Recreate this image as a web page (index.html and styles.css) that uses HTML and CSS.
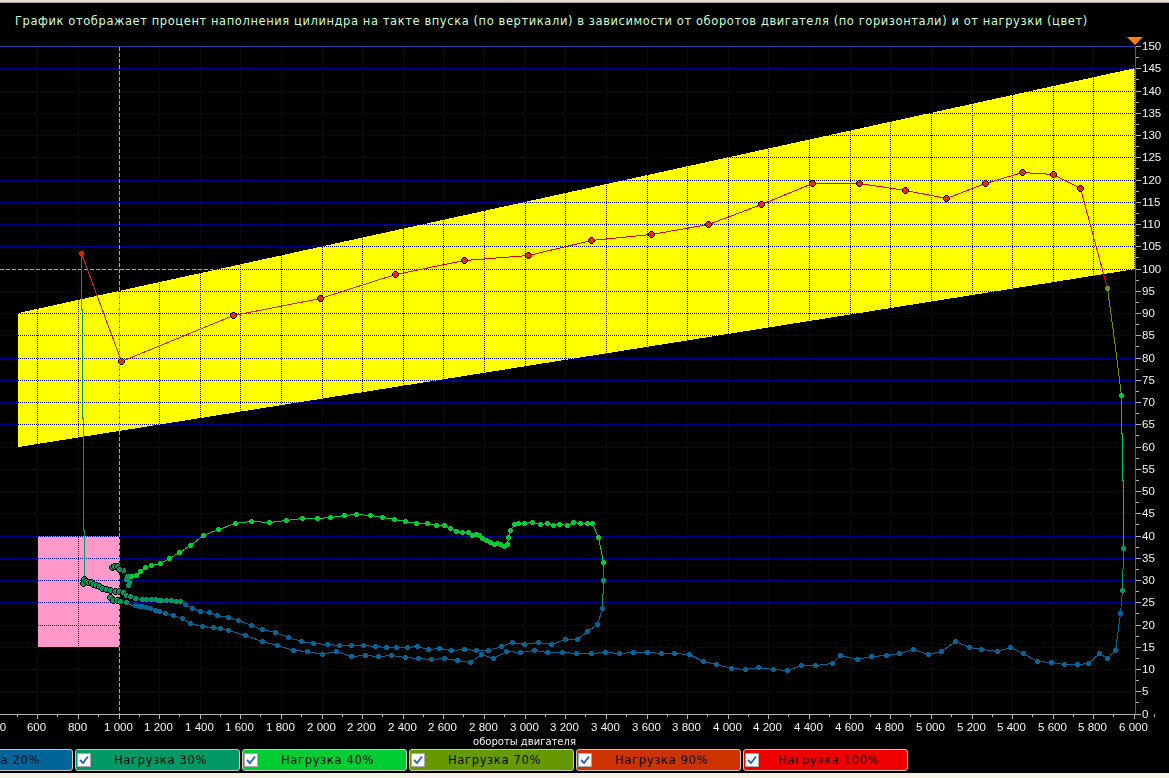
FILE: index.html
```html
<!DOCTYPE html>
<html lang="ru">
<head>
<meta charset="utf-8">
<title>График наполнения цилиндра</title>
<link rel="stylesheet" href="styles.css">
</head>
<body>
<div class="strip-top"></div>
<main class="panel">
  <h1 class="title">График отображает процент наполнения цилиндра на такте впуска (по вертикали) в зависимости от оборотов двигателя (по горизонтали) и от нагрузки (цвет)</h1>
  <div class="plot">
    <canvas id="grid" class="grid" width="1169" height="718"></canvas>
    <svg id="chart" class="chart" width="1169" height="718" viewBox="0 30 1169 718" xmlns="http://www.w3.org/2000/svg"></svg>
  </div>
  <div class="tabs">
    <label class="tab tab-20"><span class="check"><svg width="10" height="10" viewBox="0 0 10 10"><path class="tick" d="M1 5 L4 8 L9 1.5"/></svg></span><span class="tab-text">Нагрузка 20%</span></label>
    <label class="tab tab-30"><span class="check"><svg width="10" height="10" viewBox="0 0 10 10"><path class="tick" d="M1 5 L4 8 L9 1.5"/></svg></span><span class="tab-text">Нагрузка 30%</span></label>
    <label class="tab tab-40"><span class="check"><svg width="10" height="10" viewBox="0 0 10 10"><path class="tick" d="M1 5 L4 8 L9 1.5"/></svg></span><span class="tab-text">Нагрузка 40%</span></label>
    <label class="tab tab-70"><span class="check"><svg width="10" height="10" viewBox="0 0 10 10"><path class="tick" d="M1 5 L4 8 L9 1.5"/></svg></span><span class="tab-text">Нагрузка 70%</span></label>
    <label class="tab tab-90"><span class="check"><svg width="10" height="10" viewBox="0 0 10 10"><path class="tick" d="M1 5 L4 8 L9 1.5"/></svg></span><span class="tab-text">Нагрузка 90%</span></label>
    <label class="tab tab-100"><span class="check"><svg width="10" height="10" viewBox="0 0 10 10"><path class="tick" d="M1 5 L4 8 L9 1.5"/></svg></span><span class="tab-text">Нагрузка 100%</span></label>
  </div>
</main>
<div class="strip-bottom"></div>
<script src="chart.js"></script>
</body>
</html>
```
FILE: styles.css
```css
* { box-sizing: border-box; }
html, body { margin: 0; height: 100%; overflow: hidden; background: #f6f2e6; }
body { display: flex; flex-direction: column; width: 1169px; height: 778px; }
.strip-top { height: 3px; flex: none; background: linear-gradient(#e8e4d8, #d8d4c4 70%, #77756c); }
.strip-bottom { flex: 1; background: #f6f2e6; }
.panel { flex: none; height: 770px; background: #000; overflow: hidden; }
.title {
  margin: 0; height: 27px; padding: 10px 0 0 15px;
  font: 400 11.5px/16px "DejaVu Sans", sans-serif;
  letter-spacing: 0.58px; color: #ccffcc; white-space: nowrap;
}
.plot { position: relative; width: 1169px; height: 718px; }
.grid { display: block; }
.chart { position: absolute; left: 0; top: 0; display: block; }
.tabs { display: flex; gap: 2px; margin: 1px 0 0 -92px; height: 22px; }
.tab {
  position: relative; flex: none; width: 165px; height: 22px;
  display: flex; align-items: center; justify-content: center;
  border: 1px solid #c8c8c0; border-radius: 3px;
}
.tab-text { font: 400 11.5px/14px "DejaVu Sans", sans-serif; letter-spacing: 0.65px; color: #0a0a0a; padding-left: 6px; }
.check {
  position: absolute; left: 1px; top: 3px; width: 14px; height: 14px;
  background: #fff; border: 1px solid #a8a8a8;
  display: flex; align-items: center; justify-content: center;
}
.tick { fill: none; stroke: #316ac5; stroke-width: 2; }
.tab-20 { background: #006699; }
.tab-30 { background: #009966; }
.tab-40 { background: #00cc33; }
.tab-70 { background: #669900; }
.tab-90 { background: #cc3300; }
.tab-100 { background: #ee0000; }

.c-cross { fill: none; stroke: #a8a6bc; stroke-width: 1; stroke-dasharray: 4 2; shape-rendering: crispEdges; }
.c-top { fill: none; stroke: #3333aa; stroke-width: 1; shape-rendering: crispEdges; }
.c-yaxis { fill: none; stroke: #55559a; stroke-width: 1; shape-rendering: crispEdges; }
.c-ticks { fill: none; stroke: #b4b4b4; stroke-width: 1; shape-rendering: crispEdges; }
.c-line { fill: none; stroke-width: 1; shape-rendering: crispEdges; }
.c-dot { shape-rendering: crispEdges; }
.c-num { font: 400 11.5px "Liberation Sans", sans-serif; fill: #f4f4f4; }
.c-xname { font: 400 10px "DejaVu Sans", sans-serif; fill: #f4f4f4; text-anchor: middle; }
.c-yname { font: 400 10px "DejaVu Sans", sans-serif; fill: #f4f4f4; text-anchor: middle; }
.c-marker { fill: #ff8010; }
```
FILE: chart.js
```js
(function () {
  var NS = 'http://www.w3.org/2000/svg';
  var svg = document.getElementById('chart');
  function el(name, attrs, text) {
    var e = document.createElementNS(NS, name);
    for (var k in attrs) e.setAttribute(k, attrs[k]);
    if (text != null) e.textContent = text;
    svg.appendChild(e);
    return e;
  }
  // converts coordinates read from a crop (scale 3) to page coordinates
  function crop(bx, by, list) {
    var out = [];
    for (var i = 0; i < list.length; i += 2) out.push([bx + list[i] / 3, by + list[i + 1] / 3]);
    return out;
  }
  function line(pts, color) {
    el('polyline', { 'class': 'c-line', stroke: color, points: pts.map(function (p) { return (Math.floor(p[0]) + 0.5) + ',' + (Math.floor(p[1]) + 0.5); }).join(' ') });
  }
  function plus(x, y, r, fill) {
    x = Math.floor(x); y = Math.floor(y);
    var d;
    if (r === 2) d = 'M' + (x - 1) + ' ' + (y - 2) + 'h3v1h1v3h-1v1h-3v-1h-1v-3h1z';
    else d = 'M' + (x - 1) + ' ' + (y - 3) + 'h3v1h1v1h1v3h-1v1h-1v1h-3v-1h-1v-1h-1v-3h1v-1h1z';
    el('path', { 'class': 'c-dot', fill: fill, d: d });
  }
  function dots(pts, color) { pts.forEach(function (p) { plus(p[0], p[1], 2, color); }); }
  function outlined(pts, color) {
    pts.forEach(function (p) { plus(p[0], p[1], 3, '#000'); plus(p[0], p[1], 2, color); });
  }

  var gx = [], gy = [], k, i;
  for (k = -3; k <= 25; k++) gx.push(Math.floor(119 + 40.62 * k));
  for (k = 0; k <= 30; k++) gy.push(Math.floor(46.6 + 22.25 * k));

  // pixel layer under the curves: band, idle zone and dotted grid (canvas origin is y=30)
  var ctx = document.getElementById('grid').getContext('2d');
  var OY = 30;
  ctx.fillStyle = '#ffff00';
  for (i = 18; i < 1135; i++) {
    var f = (i - 18) / 1117;
    var top = Math.round(313 + (68 - 313) * f), bottom = Math.round(447 + (269 - 447) * f);
    ctx.fillRect(i, top - OY, 1, bottom - top);
  }
  ctx.fillStyle = '#ff99cc';
  ctx.fillRect(38, 536 - OY, 81, 111);
  ctx.fillStyle = '#000099';
  gx.forEach(function (x) {
    if (x < 0) return;
    for (i = 47; i < 714; i += 2) ctx.fillRect(x, i - OY, 1, 1);
  });
  gy.forEach(function (y) {
    for (i = 0; i < 1135; i += 2) ctx.fillRect(i, y - OY, 1, 1);
  });

  el('path', { 'class': 'c-cross', d: 'M119.5 47V714M0 269.5H213' });
  el('path', { 'class': 'c-top', d: 'M0 46.5H1135' });
  el('path', { 'class': 'c-yaxis', d: 'M1135.5 46V714' });

  var t = 'M0 714.5H1136';
  gx.forEach(function (x) {
    t += 'M' + x + '.5 714V719';
    t += 'M' + Math.floor(x + 20.3) + '.5 714V717';
  });
  gy.forEach(function (y, n) {
    t += 'M1136 ' + y + '.5H1141';
    if (n < 30) t += 'M1136 ' + Math.floor(y + 11.1) + '.5H1139';
  });
  el('path', { 'class': 'c-ticks', d: t });

  for (k = 0; k <= 30; k++) {
    el('text', { 'class': 'c-num', x: 1142, y: gy[k] + 4 }, String(150 - k * 5));
  }
  gx.forEach(function (x, n) {
    var v = 400 + n * 200;
    var s = v >= 1000 ? Math.floor(v / 1000) + '\u00a0' + String(v % 1000 + 1000).slice(1) : String(v);
    el('text', { 'class': 'c-num', x: x - 0.5, y: 730.5, 'text-anchor': 'middle' }, s);
  });
  el('text', { 'class': 'c-xname', x: 524.5, y: 745 }, 'обороты двигателя');
  el('text', { 'class': 'c-yname', x: 0, y: 0, transform: 'translate(1175 385) rotate(-90)' }, 'наполнение цилиндра');

  el('polygon', { 'class': 'c-marker', points: '1127,37 1143,37 1135,45' });

  var BLUE = '#006699', TEAL = '#009966', GREEN = '#00cc33', OLIVE = '#669900', ORANGE = '#dd2200', RED = '#ee0000';

  // Load 30% branches around the idle zone
  var tealA = crop(20, 520, [190,190,192,178,200,183,206,188,214,186,220,192,230,196,238,198,248,205,258,209,272,212,285,214,298,214,310,218,320,225,330,230,345,235,368,237,380,237,393,237,405,237,415,240,425,242,440,240,455,240,468,245,480,245]);
  var tealB = crop(20, 520, [270,233,280,240,292,240,300,243,320,248,333,255,345,257]);
  var tealArc = crop(20, 520, [278,142,284,138,292,138,297,148]);
  var tealFrag = crop(20, 520, [322,168,320,178,328,188,325,195,310,150]);

  var blueA = crop(110, 500, [210,305,225,312,246,324,270,333,297,336,321,345,354,351,384,360,423,375,456,387,495,396,534,411,573,423,609,429,651,432,687,435,723,435,759,435])
    .concat(crop(360, 500, [9,435,45,438,78,441,108,441,141,441,171,438,204,447,237,444,273,450,312,447,348,450,384,450,423,438,456,426,492,432,534,426,573,432,615,417,651,417,681,393,711,372,727,324]));
  var blueB = crop(20, 520, [345,257,358,258,366,260,378,262,390,265,405,272,417,275,435,279,459,285,486,296,510,309,546,318,579,321,600,326])
    .concat(crop(110, 500, [276,378,309,381,354,390,405,405,456,423,501,435,549,450,591,453,636,462,678,453,723,468,765,465]))
    .concat(crop(360, 500, [15,465,54,468,93,465,135,471,174,474,213,477,252,474,291,480,330,486,363,462,399,474,438,453,480,456,522,450,561,456,606,456,648,459,693,459,735,456]))
    .concat(crop(610, 620, [27,99,69,96,111,96,153,99,192,99,237,102,279,123,318,132,363,144,405,147,444,141,489,147,531,150,573,135,615,135,666,129,690,105,741,117,783,108,828,105,867,99,909,87,954,102,993,93,1035,63,1077,81,1113,87,1161,93,1200,81,1239,99,1281,123]))
    .concat(crop(1040, 540, [33,366,72,372,111,372,144,369,177,339,201,354,225,330,242,219]));
  var green = crop(20, 520, [324,170,335,170,348,165,360,153,375,142,393,135,420,130,447,116,477,96,510,77,549,45,594,27])
    .concat(crop(110, 500, [324,87,375,69,425,63,477,66,528,60,576,54,621,54,660,51,702,45,738,42]))
    .concat(crop(360, 500, [30,45,66,51,102,57,135,63,168,69,201,69,228,77,252,75,270,84,288,93,306,96,324,96,336,105,348,103,357,107,366,114,378,120,390,126,402,132,411,129,420,132,432,138,441,132,444,111,450,90,462,74,474,69,494,69,516,66,540,72,561,69,579,75,597,72,621,75,639,66,660,69,681,69,696,69,714,111,729,186]));
  var red = [[81,253],[121,361],[233,315],[320,298],[395,274]];
  var red2 = [[395,274],[464,260],[528,255],[591,240],[651,234]]
    .concat(crop(700, 150, [24,222,185,162,336,99,477,99,615,120,738,144,855,99,966,66,1059,72,1140,114]));

  // lines
  line([[81,253],[81,309],[82,309],[82,418],[83,418],[83,530],[84,530],[84,578]], TEAL);
  line([[84,578]].concat(tealA), TEAL);
  line(tealB, TEAL);
  line([tealA[tealA.length - 1]].concat(blueA), BLUE);
  line(blueB, BLUE);
  line(green, GREEN);
  line([green[green.length - 1], [603, 580]], TEAL);
  line([[603, 580], [602, 608]], TEAL);
  line(red, ORANGE);
  line(red2.concat([[1107, 288]]), RED);
  line([[1107, 288], [1110, 310], [1116, 355], [1121, 395]], OLIVE);
  line([[1121, 395], [1121, 433], [1122, 433], [1122, 480], [1123, 480], [1123, 548]], GREEN);
  line([[1123, 548], [1122, 590]], TEAL);
  line([[1122, 590], [1120.7, 613]], BLUE);

  // markers
  dots(blueA.slice(1), BLUE);
  dots(blueB, BLUE);
  dots(green, GREEN);
  dots(crop(20, 520, [345,235,368,237,380,237,393,237,405,237,415,240,425,242,440,240,455,240,468,245,480,245]), TEAL);
  dots([[603, 580], [1123, 548], [1122, 590]], TEAL);
  dots([[1121, 395]], GREEN);
  dots([[1107, 288]], OLIVE);
  dots(tealFrag, TEAL);
  outlined(tealA.slice(0, 16), TEAL);
  outlined(tealB.slice(0, 5), TEAL);
  outlined(tealArc, TEAL);
  plus(81, 253, 2, ORANGE);
  outlined([[121, 361]].concat(red.slice(2)).concat(red2.slice(1)), '#ee2a00');
})();
```
